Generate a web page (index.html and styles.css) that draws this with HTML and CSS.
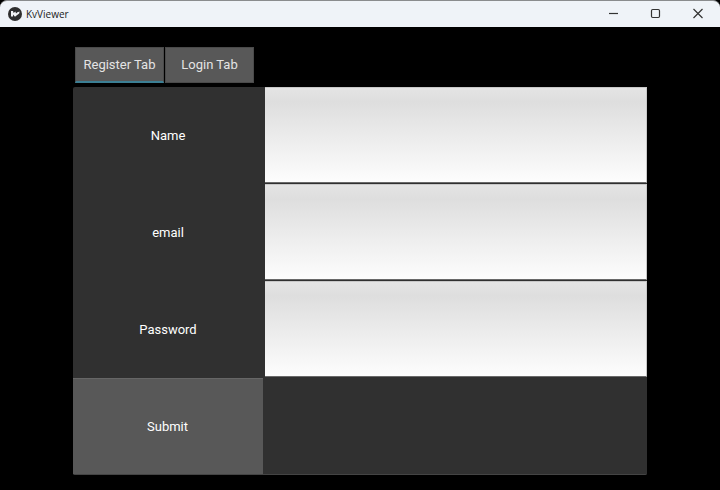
FILE: index.html
```html
<!DOCTYPE html>
<html>
<head>
<meta charset="UTF-8">
<title>KvViewer</title>
<link rel="stylesheet" href="styles.css">
</head>
<body>
<div class="window">
	<div class="titlebar">
		<svg class="logo" width="14" height="14" viewBox="0 0 14 14">
			<circle cx="7" cy="7" r="7" fill="#2e2e2e"/>
			<path d="M3 4 L3 9.5 L5 9.5 L5 7.6 L7 9.8 L8.2 8.8 L11.2 6.6 L11.6 4.6 L9.4 5.2 L8 6.4 L7.4 4.4 L5.6 6 L5 4 Z" fill="#f2f4f6"/>
		</svg>
		<span class="apptitle">KvViewer</span>
		<div class="controls">
			<svg class="ctl" width="42" height="27" viewBox="0 0 42 27"><path d="M16 13.5 H25" stroke="#333" stroke-width="1.2" fill="none"/></svg>
			<svg class="ctl" width="42" height="27" viewBox="0 0 42 27"><rect x="16.5" y="9.5" width="8" height="8" rx="1.2" stroke="#333" stroke-width="1.2" fill="none"/></svg>
			<svg class="ctl" width="42" height="27" viewBox="0 0 42 27"><path d="M16.5 9 L25.5 18 M25.5 9 L16.5 18" stroke="#333" stroke-width="1.2" fill="none"/></svg>
		</div>
	</div>
	<div class="content">
		<div class="tabs">
			<div class="tab active">Register Tab</div>
			<div class="tab">Login Tab</div>
		</div>
		<div class="panel">
			<div class="label">Name</div>
			<div class="field"></div>
			<div class="label">email</div>
			<div class="field"></div>
			<div class="label">Password</div>
			<div class="field"></div>
			<div class="btn">Submit</div>
			<div class="empty"></div>
		</div>
	</div>
</div>
</body>
</html>
```

FILE: styles.css
```css
html, body {
	margin: 0;
	padding: 0;
	background: #000;
}
.window {
	width: 720px;
	height: 490px;
	display: flex;
	flex-direction: column;
	overflow: hidden;
	font-family: Roboto, "Liberation Sans", sans-serif;
}
.titlebar {
	height: 27px;
	flex: none;
	display: flex;
	align-items: center;
	padding-left: 8px;
	padding-right: 1px;
	background: #eff3f8;
	border-top: 1px solid #8a8c8e;
	box-sizing: border-box;
	border-radius: 7px 7px 0 0;
}
.logo {
	margin-right: 4px;
}
.apptitle {
	font-family: "Open Sans", "Liberation Sans", sans-serif;
	font-size: 10px;
	color: #222;
}
.controls {
	margin-left: auto;
	display: flex;
	margin-top: -1px;
}
.ctl {
	display: block;
}
.content {
	flex: 1;
	padding: 20px 0 0 73px;
}
.tabs {
	display: flex;
	gap: 1px;
	padding-left: 2px;
	height: 36px;
	margin-bottom: 4px;
}
.tab {
	width: 89px;
	display: flex;
	align-items: center;
	justify-content: center;
	padding-bottom: 2px;
	background: #585858;
	border: 1px solid #4a4a4a;
	box-sizing: border-box;
	color: #e4e4e4;
	font-size: 13px;
}
.tab.active {
	padding-bottom: 1px;
	border-bottom: 2px solid #3c7f94;
}
.panel {
	width: 574px;
	height: 388px;
	display: grid;
	grid-template-columns: 191px 383px;
	grid-template-rows: 97px 97px 97px 97px;
	background: #303030;
	border-radius: 2px;
	box-shadow: inset 0 -1px 0 #444;
}
.label, .btn {
	display: flex;
	align-items: center;
	justify-content: center;
	padding: 0 1px 1px 0;
	color: #fff;
	font-size: 13px;
}
.field {
	margin: 0 0 1px 1px;
	background: linear-gradient(#e4e4e4 0%, #dedede 15%, #fdfdfd 100%);
	border-top: 1px solid #c8c8c8;
	border-right: 1px solid #c8c8c8;
	border-bottom: 1px solid #6a6a6a;
	box-sizing: border-box;
}
.btn {
	margin-right: 1px;
	margin-bottom: 1px;
	padding-bottom: 0;
	background: #585858;
	border-top: 1px solid #666;
	box-sizing: border-box;
}
.empty {
	margin-bottom: 1px;
	background: #303030;
}
```
